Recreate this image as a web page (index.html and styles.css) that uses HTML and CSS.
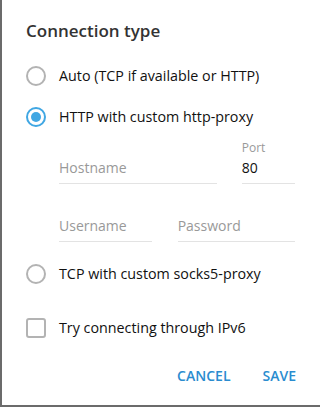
FILE: index.html
```html
<!DOCTYPE html>
<html>
<head>
  <title>Connection type</title>
  <link rel="stylesheet" href="styles.css">
</head>
<body>
  <div class="dialog">
    <h1 class="title">Connection type</h1>

    <label class="option">
      <span class="radio"></span>
      <span>Auto (TCP if available or HTTP)</span>
    </label>

    <label class="option">
      <span class="radio checked"></span>
      <span>HTTP with custom http-proxy</span>
    </label>

    <div class="fields">
      <div class="row">
        <div class="field host">
          <div class="value placeholder">Hostname</div>
        </div>
        <div class="field port">
          <div class="label">Port</div>
          <div class="value">80</div>
        </div>
      </div>
      <div class="row">
        <div class="field user">
          <div class="value placeholder">Username</div>
        </div>
        <div class="field pass">
          <div class="value placeholder">Password</div>
        </div>
      </div>
    </div>

    <label class="option socks">
      <span class="radio"></span>
      <span>TCP with custom socks5-proxy</span>
    </label>

    <label class="option ipv6">
      <span class="checkbox"></span>
      <span>Try connecting through IPv6</span>
    </label>

    <div class="buttons">
      <button class="btn">CANCEL</button>
      <button class="btn">SAVE</button>
    </div>
  </div>
</body>
</html>
```

FILE: styles.css
```css
body {
  margin: 0;
  background: #6b6b6b;
  font-family: 'Open Sans', sans-serif;
  color: #111;
}

.dialog {
  margin-left: 2px;
  width: 318px;
  height: 405px;
  background: #fff;
  box-sizing: border-box;
  padding: 20px 0 0 24px;
}

.title {
  margin: 0 0 23px;
  font-size: 17px;
  font-weight: 600;
  color: #333;
  line-height: 22px;
}

.option {
  display: flex;
  align-items: center;
  height: 22px;
  margin-bottom: 19px;
  font-size: 14.3px;
  line-height: 22px;
}

.radio, .checkbox {
  width: 16px;
  height: 16px;
  border: 2px solid #b3b3b3;
  border-radius: 50%;
  margin-right: 13px;
  flex: none;
  position: relative;
}

.radio.checked {
  border-color: #40a7e3;
}

.radio.checked::after {
  content: '';
  position: absolute;
  left: 3px;
  top: 3px;
  width: 10px;
  height: 10px;
  border-radius: 50%;
  background: #40a7e3;
}

.checkbox {
  border-radius: 3px;
}

.fields {
  padding-left: 33px;
  margin-top: -7px;
}

.row {
  display: flex;
  align-items: flex-end;
  height: 58px;
}

.row:first-child {
  height: 44px;
}

.field {
  border-bottom: 1px solid #e3e3e3;
  margin-right: 25px;
}

.host { width: 160px; }
.port { width: 54px; }
.user { width: 94px; margin-right: 26px; }
.pass { width: 119px; }

.label {
  font-size: 12px;
  color: #999;
  line-height: 16px;
  margin-bottom: 2px;
}

.value {
  font-size: 14px;
  line-height: 20px;
  padding-bottom: 5px;
}

.placeholder {
  color: #999;
}

.socks {
  margin-top: 21px;
  margin-bottom: 32px;
}

.ipv6 {
  margin-bottom: 27px;
}

.buttons {
  display: flex;
  justify-content: flex-end;
  padding-right: 24px;
  gap: 32px;
}

.btn {
  background: none;
  border: none;
  padding: 0;
  font-family: 'Open Sans', sans-serif;
  font-size: 14px;
  line-height: 20px;
  font-weight: 600;
  color: #2a8ccf;
  cursor: pointer;
}
```
